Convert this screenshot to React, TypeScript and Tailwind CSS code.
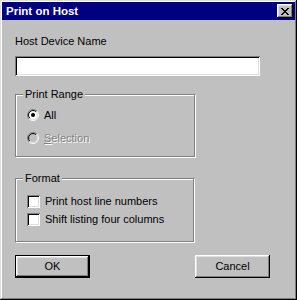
import React from 'react';

const FONT = { fontFamily: '"Liberation Sans", Arial, sans-serif' };

function CloseGlyph() {
  // 8x7 pixel X
  const px: [number, number][] = [
    [0, 0], [1, 0], [6, 0], [7, 0],
    [1, 1], [2, 1], [5, 1], [6, 1],
    [2, 2], [3, 2], [4, 2], [5, 2],
    [3, 3], [4, 3],
    [2, 4], [3, 4], [4, 4], [5, 4],
    [1, 5], [2, 5], [5, 5], [6, 5],
    [0, 6], [1, 6], [6, 6], [7, 6],
  ];
  return (
    <svg width="8" height="7" viewBox="0 0 8 7" shapeRendering="crispEdges">
      {px.map(([x, y]) => (
        <rect key={`${x}-${y}`} x={x} y={y} width="1" height="1" fill="#000" />
      ))}
    </svg>
  );
}

function Radio({ checked, disabled }: { checked?: boolean; disabled?: boolean }) {
  const arc = (r: number, first: boolean) => {
    const d = r * 0.7071;
    const bl = `${6 - d} ${6 + d}`;
    const tr = `${6 + d} ${6 - d}`;
    return first ? `M ${bl} A ${r} ${r} 0 0 1 ${tr}` : `M ${tr} A ${r} ${r} 0 0 1 ${bl}`;
  };
  return (
    <svg width="12" height="12" viewBox="0 0 12 12" className="shrink-0">
      <circle cx="6" cy="6" r="4.5" fill={disabled ? '#c0c0c0' : '#fff'} />
      <path d={arc(5.5, true)} stroke="#808080" fill="none" strokeWidth="1" />
      <path d={arc(5.5, false)} stroke="#fff" fill="none" strokeWidth="1" />
      <path d={arc(4.5, true)} stroke="#000" fill="none" strokeWidth="1" />
      <path d={arc(4.5, false)} stroke="#dfdfdf" fill="none" strokeWidth="1" />
      {checked && <circle cx="6" cy="6" r="2" fill="#000" />}
    </svg>
  );
}

function Checkbox() {
  return (
    <div className="w-[13px] h-[13px] shrink-0 bg-white shadow-[inset_1px_1px_#808080,inset_-1px_-1px_#ffffff,inset_2px_2px_#000000,inset_-2px_-2px_#dfdfdf]" />
  );
}

function GroupBox({
  label,
  className,
  children,
}: {
  label: string;
  className: string;
  children: React.ReactNode;
}) {
  return (
    <div
      className={`relative border border-[#808080] shadow-[1px_1px_0_#ffffff,inset_1px_1px_0_#ffffff] ${className}`}
    >
      <span className="absolute left-[7px] top-[-7px] bg-[#c0c0c0] px-[2px] leading-[13px] text-[11px] text-black">
        {label}
      </span>
      {children}
    </div>
  );
}

export default function App() {
  return (
    <div
      className="w-[297px] h-[300px] bg-[#c0c0c0] p-[2px] flex flex-col shadow-[inset_-1px_-1px_#000000,inset_1px_1px_#dfdfdf,inset_-2px_-2px_#808080,inset_2px_2px_#ffffff]"
      style={FONT}
    >
      {/* title bar */}
      <div className="h-[18px] bg-[#000080] flex items-center justify-between pl-[4px] pr-[2px]">
        <span className="text-white font-bold text-[11.5px] leading-[14px]">Print on Host</span>
        <button className="w-[16px] h-[14px] bg-[#c0c0c0] flex items-center justify-center shadow-[inset_-1px_-1px_#000000,inset_1px_1px_#ffffff,inset_-2px_-2px_#808080,inset_2px_2px_#dfdfdf]">
          <CloseGlyph />
        </button>
      </div>

      <div className="flex flex-col pl-[13px] text-[11px] leading-[13px] text-black">
        <div className="mt-[15px]">Host Device Name</div>
        <div className="mt-[8px] w-[245px] h-[20px] bg-white shadow-[inset_1px_1px_#808080,inset_-1px_-1px_#ffffff,inset_2px_2px_#000000,inset_-2px_-2px_#dfdfdf]" />

        <GroupBox label="Print Range" className="mt-[18px] w-[180px] h-[63px]">
          <div className="flex flex-col gap-[11px] pt-[14px] pl-[11px]">
            <div className="flex items-center gap-[5px] h-[12px]">
              <Radio checked />
              <span>All</span>
            </div>
            <div className="flex items-center gap-[5px] h-[12px]">
              <Radio disabled />
              <span className="text-[#808080] [text-shadow:1px_1px_0_#ffffff]">
                <span className="underline">S</span>election
              </span>
            </div>
          </div>
        </GroupBox>

        <GroupBox label="Format" className="mt-[21px] w-[179px] h-[64px]">
          <div className="flex flex-col gap-[5px] pt-[16px] pl-[11px]">
            <div className="flex items-center gap-[5px] h-[13px]">
              <Checkbox />
              <span>Print host line numbers</span>
            </div>
            <div className="flex items-center gap-[5px] h-[13px]">
              <Checkbox />
              <span>Shift listing four columns</span>
            </div>
          </div>
        </GroupBox>

        <div className="mt-[13px] flex gap-[105px]">
          <button className="w-[75px] h-[23px] bg-[#c0c0c0] border border-black flex items-center justify-center shadow-[inset_-1px_-1px_#000000,inset_1px_1px_#ffffff,inset_-2px_-2px_#808080,inset_2px_2px_#dfdfdf]">
            OK
          </button>
          <button className="w-[75px] h-[23px] bg-[#c0c0c0] flex items-center justify-center shadow-[inset_-1px_-1px_#000000,inset_1px_1px_#ffffff,inset_-2px_-2px_#808080,inset_2px_2px_#dfdfdf]">
            Cancel
          </button>
        </div>
      </div>
    </div>
  );
}
